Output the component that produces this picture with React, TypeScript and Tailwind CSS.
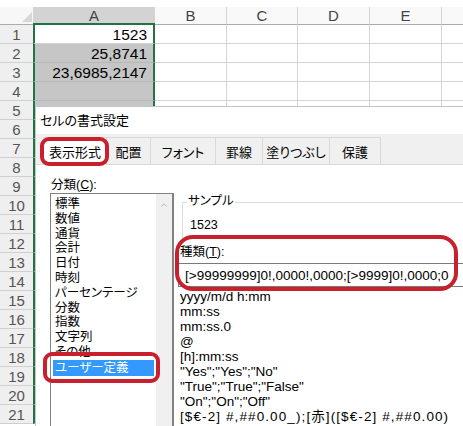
import { ChevronUp } from "lucide-react";

const values: Record<number, string> = {
  1: "1523",
  2: "25,8741",
  3: "23,6985,2147",
};

const rowNums = Array.from({ length: 21 }, (_, i) => i + 1);

const tabs = [
  { label: "表示形式", w: "w-[64px]", active: true },
  { label: "配置", w: "w-[45px]" },
  { label: "フォント", w: "w-[66px]" },
  { label: "罫線", w: "w-[48px]" },
  { label: "塗りつぶし", w: "w-[68px]" },
  { label: "保護", w: "w-[52px]" },
];

const categories = [
  "標準",
  "数値",
  "通貨",
  "会計",
  "日付",
  "時刻",
  "パーセンテージ",
  "分数",
  "指数",
  "文字列",
  "その他",
];

const formats = [
  "yyyy/m/d h:mm",
  "mm:ss",
  "mm:ss.0",
  "@",
  "[h]:mm:ss",
  '"Yes";"Yes";"No"',
  '"True";"True";"False"',
  '"On";"On";"Off"',
];

const Sheet = () => (
  <div className="flex flex-col">
    <div className="h-[7px] bg-white" />

    {/* 列見出し */}
    <div className="flex h-[18px] text-[15px] leading-[17px] text-[#444]">
      <div className="relative w-[33px] border-b border-[#ababab] bg-[#f7f7f7]">
        <svg className="absolute bottom-[2px] right-[1px]" width="10" height="10" viewBox="0 0 10 10">
          <polygon points="10,0 10,10 0,10" fill="#d8d8d8" />
        </svg>
      </div>
      <div className="w-[122px] border-b-2 border-[#217346] bg-[#d3d3d3] text-center">A</div>
      <div className="w-[72px] border-r border-b border-r-[#d4d4d4] border-b-[#ababab] bg-[#f9f9f9] text-center">B</div>
      <div className="w-[71px] border-r border-b border-r-[#d4d4d4] border-b-[#ababab] bg-[#f9f9f9] text-center">C</div>
      <div className="w-[72px] border-r border-b border-r-[#d4d4d4] border-b-[#ababab] bg-[#f9f9f9] text-center">D</div>
      <div className="w-[72px] border-r border-b border-r-[#d4d4d4] border-b-[#ababab] bg-[#f9f9f9] text-center">E</div>
      <div className="flex-1 border-b border-[#ababab] bg-[#f9f9f9]" />
    </div>

    {/* 行 */}
    {rowNums.map((n) => (
      <div key={n} className="flex h-[19px]">
        <div className="w-[33px] border-b border-[#d0d0d0] bg-[#efefef] text-center text-[15px] leading-[19px] text-[#555]">
          {n}
        </div>
        <div
          className={`w-[122px] border-x-2 border-b border-x-[#217346] pr-[6px] text-right text-[15.5px] leading-[19px] text-black ${
            n === 1 ? "border-b-[#d4d4d4] bg-white" : "border-b-[#b8b8b8] bg-[#c6c6c6]"
          }`}
        >
          {values[n] ?? ""}
        </div>
        <div className="w-[72px] border-r border-b border-[#d4d4d4]" />
        <div className="w-[71px] border-r border-b border-[#d4d4d4]" />
        <div className="w-[72px] border-r border-b border-[#d4d4d4]" />
        <div className="w-[72px] border-r border-b border-[#d4d4d4]" />
        <div className="flex-1 border-b border-[#d4d4d4]" />
      </div>
    ))}
  </div>
);

const Dialog = () => (
  <div className="absolute left-[35px] top-[106px] flex h-[330px] w-[440px] flex-col border-l border-t border-l-[#c8c8c8] border-t-[#bcc6d2] bg-white font-['Liberation_Sans','Noto_Sans_CJK_JP',sans-serif] [font-feature-settings:'palt']">
    {/* タイトル */}
    <div className="h-[27px] pl-[4px] text-[13px] leading-[27px] text-black">セルの書式設定</div>

    {/* タブ */}
    <div className="flex h-[31px] items-end border-b border-[#d9d9d9] bg-[#f0f0f0] pl-[8px]">
      {tabs.map((t) => (
        <div
          key={t.label}
          className={`${t.w} -ml-px h-[27px] border border-b-0 border-[#d9d9d9] text-center text-[13px] leading-[30px] text-black ${
            t.active ? "-mb-px h-[28px] bg-white" : "bg-[#f0f0f0]"
          }`}
        >
          {t.label}
        </div>
      ))}
    </div>

    {/* 本体 */}
    <div className="flex flex-1">
      {/* 分類 */}
      <div className="flex w-[138px] flex-col pl-[14px] pt-[13px]">
        <div className="h-[15px] pl-[1px] text-[12.5px] leading-[15px] text-black">
          分類(<span className="underline">C</span>):
        </div>
        <div className="flex flex-1 border border-r-2 border-[#828282]">
          <div className="flex-1 pt-[3px] text-[12.5px] leading-[14.8px] text-black">
            {categories.map((c) => (
              <div key={c} className="pl-[4px]">
                {c}
              </div>
            ))}
            <div className="mx-[2px] h-[16px] bg-[#3399ff] pl-[2px] leading-[16px] text-white">
              ユーザー定義
            </div>
          </div>
          <div className="w-[16px] bg-[#f0f0f0] pt-[6px]">
            <ChevronUp className="mx-auto h-[10px] w-[10px] text-[#a6a6a6]" strokeWidth={2} />
          </div>
        </div>
      </div>

      {/* 右側 */}
      <div className="flex flex-1 flex-col">
        <div className="relative ml-[8px] mt-[37px] h-[38px] border-l border-t border-[#dcdcdc] pl-[7px] pt-[15px] text-[12.5px] leading-[15px] text-black">
          <span className="absolute -top-[9px] left-[4px] bg-white px-[1px]">サンプル</span>
          1523
        </div>
        <div className="mt-[5px] h-[15px] pl-[6px] text-[12.5px] leading-[15px] text-black">
          種類(<span className="underline">T</span>):
        </div>
        <div className="ml-[4px] mr-[8px] mt-[3px] h-[24px] border border-[#7a7a7a] pl-[6px] text-[13.5px] leading-[23px] text-black">
          [&gt;99999999]0!,0000!,0000;[&gt;9999]0!,0000;0
        </div>
        <div className="flex-1 pl-[6px] pt-[2px] text-[13.5px] leading-[15px] text-black">
          {formats.map((f) => (
            <div key={f} className="whitespace-nowrap">
              {f}
            </div>
          ))}
          <div className="whitespace-nowrap tracking-[1.1px]">[$€-2] #,##0.00_);[赤]([$€-2] #,##0.00)</div>
        </div>
      </div>
    </div>
  </div>
);

export default function App() {
  return (
    <div className="relative h-[426px] w-[463px] overflow-hidden bg-white font-['Liberation_Sans','Noto_Sans_CJK_JP',sans-serif]">
      <Sheet />
      <Dialog />

      {/* 赤い囲み */}
      <div className="absolute left-[40px] top-[137px] h-[29px] w-[69px] rounded-[9px] border-[4px] border-[#c9202d]" />
      <div className="absolute left-[43px] top-[352px] h-[31px] w-[117px] rounded-[9px] border-[4px] border-[#c9202d]" />
      <div className="absolute left-[175px] top-[235px] h-[56px] w-[283px] rounded-[18px] border-[4px] border-[#c9202d]" />
    </div>
  );
}
